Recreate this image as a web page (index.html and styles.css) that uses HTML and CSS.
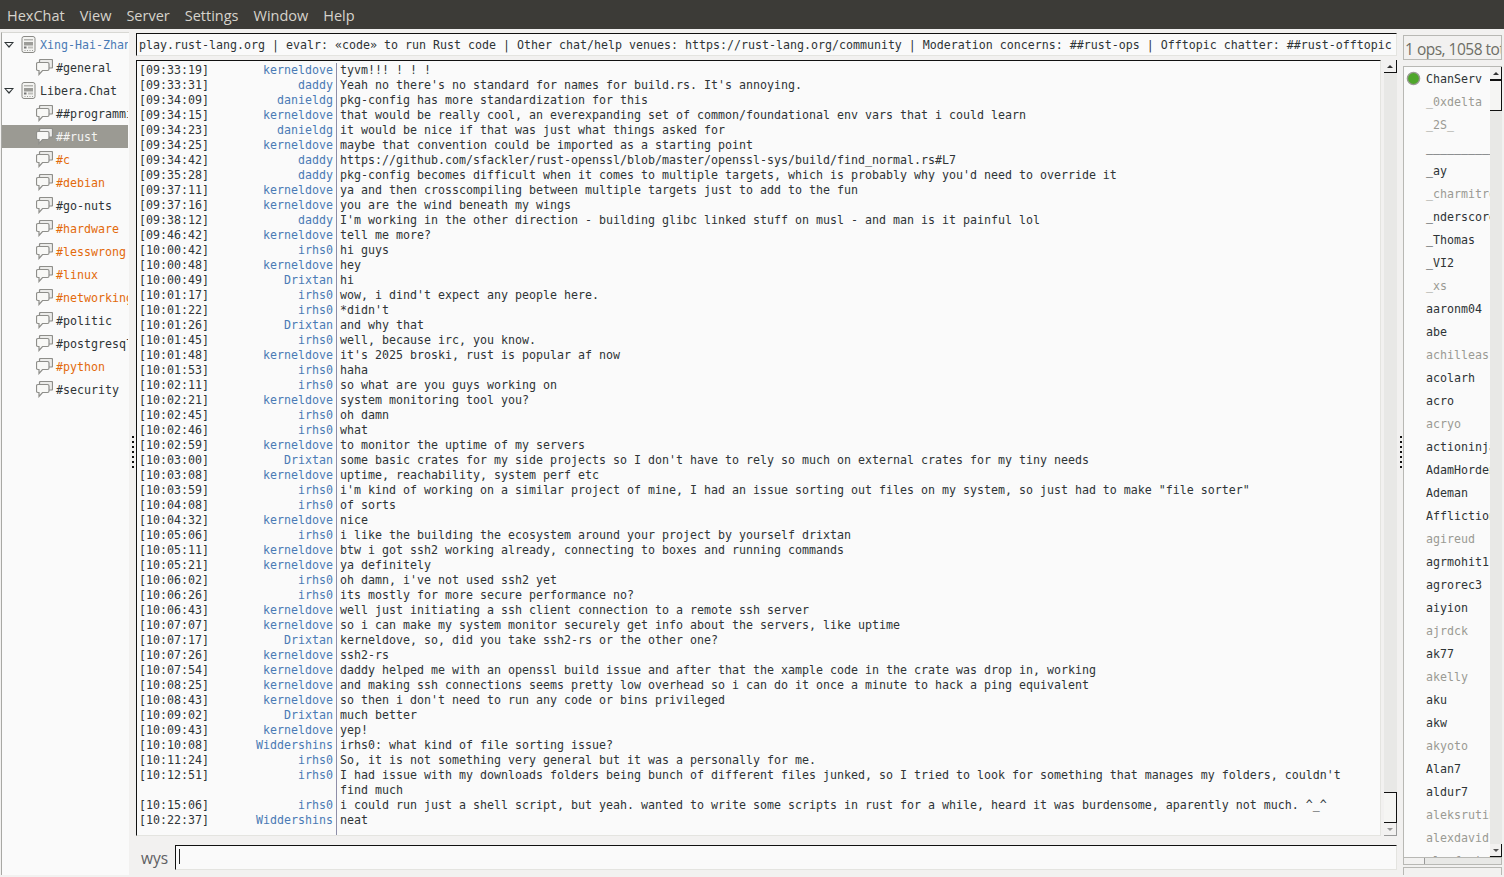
FILE: index.html
```html
<!DOCTYPE html>
<html lang="en">
<head>
<meta charset="utf-8">
<title>HexChat</title>
<link rel="stylesheet" href="styles.css">
</head>
<body>
<svg class="defs" width="0" height="0" aria-hidden="true">
  <symbol id="srv" viewBox="0 0 16 17">
    <rect x="1.5" y="0.5" width="13" height="16" rx="2" fill="#f4f4f2" stroke="#8a8a86"/>
    <rect x="3.5" y="3" width="9" height="1.5" fill="#b4b4b0"/>
    <rect x="3.5" y="6" width="9" height="3.5" fill="#9c9c98"/>
    <rect x="3.5" y="10.5" width="2.5" height="2" fill="#777"/>
    <rect x="7.5" y="10.5" width="5" height="2" fill="#c0c0bc"/>
    <path d="M4 14.5h1M6.5 14.5h1M9 14.5h1M11.5 14.5h1" stroke="#9c9c98"/>
  </symbol>
  <symbol id="chat" viewBox="0 0 17 17">
    <path d="M3.500 3.500V1.500a1 1 0 0 1 1-1H15.500a1 1 0 0 1 1 1V8a1 1 0 0 1-1 1H13" fill="#ececea" stroke="#8e8e8a" stroke-width="1.200"/>
    <path d="M2 3.500h9.500A1.500 1.500 0 0 1 13 5v5a1.500 1.500 0 0 1-1.500 1.500H6.500L3 15.500v-4H2A1.500 1.500 0 0 1 .5 10V5A1.500 1.500 0 0 1 2 3.500z" fill="#f8f8f6" stroke="#8e8e8a" stroke-width="1.200"/>
  </symbol>
</svg>
<nav class="menu">
  <span>HexChat</span><span>View</span><span>Server</span><span>Settings</span><span>Window</span><span>Help</span>
</nav>
<div class="main">
  <aside class="tree">
    <div class="row srv blue"><i class="arrow"></i><svg class="ic"><use href="#srv"/></svg><span>Xing-Hai-Zhang</span></div>
    <div class="row ch"><svg class="ic"><use href="#chat"/></svg><span>#general</span></div>
    <div class="row srv"><i class="arrow"></i><svg class="ic"><use href="#srv"/></svg><span>Libera.Chat</span></div>
    <div class="row ch"><svg class="ic"><use href="#chat"/></svg><span>##programming</span></div>
    <div class="row ch sel"><svg class="ic"><use href="#chat"/></svg><span>##rust</span></div>
    <div class="row ch or"><svg class="ic"><use href="#chat"/></svg><span>#c</span></div>
    <div class="row ch or"><svg class="ic"><use href="#chat"/></svg><span>#debian</span></div>
    <div class="row ch"><svg class="ic"><use href="#chat"/></svg><span>#go-nuts</span></div>
    <div class="row ch or"><svg class="ic"><use href="#chat"/></svg><span>#hardware</span></div>
    <div class="row ch or"><svg class="ic"><use href="#chat"/></svg><span>#lesswrong</span></div>
    <div class="row ch or"><svg class="ic"><use href="#chat"/></svg><span>#linux</span></div>
    <div class="row ch or"><svg class="ic"><use href="#chat"/></svg><span>#networking</span></div>
    <div class="row ch"><svg class="ic"><use href="#chat"/></svg><span>#politic</span></div>
    <div class="row ch"><svg class="ic"><use href="#chat"/></svg><span>#postgresql</span></div>
    <div class="row ch or"><svg class="ic"><use href="#chat"/></svg><span>#python</span></div>
    <div class="row ch"><svg class="ic"><use href="#chat"/></svg><span>#security</span></div>
  </aside>
  <div class="grip"><i></i></div>
  <section class="center">
    <div class="topic"><span>play.rust-lang.org | evalr: «code» to run Rust code | Other chat/help venues: https://rust-lang.org/community | Moderation concerns: ##rust-ops | Offtopic chatter: ##rust-offtopic</span></div>
    <div class="chatwrap">
      <div class="log">
<div class="m"><b>[09:33:19]</b><u>kerneldove</u><p>tyvm!!! ! ! !</p></div>
<div class="m"><b>[09:33:31]</b><u>daddy</u><p>Yeah no there's no standard for names for build.rs. It's annoying.</p></div>
<div class="m"><b>[09:34:09]</b><u>danieldg</u><p>pkg-config has more standardization for this</p></div>
<div class="m"><b>[09:34:15]</b><u>kerneldove</u><p>that would be really cool, an everexpanding set of common/foundational env vars that i could learn</p></div>
<div class="m"><b>[09:34:23]</b><u>danieldg</u><p>it would be nice if that was just what things asked for</p></div>
<div class="m"><b>[09:34:25]</b><u>kerneldove</u><p>maybe that convention could be imported as a starting point</p></div>
<div class="m"><b>[09:34:42]</b><u>daddy</u><p>https://github.com/sfackler/rust-openssl/blob/master/openssl-sys/build/find_normal.rs#L7</p></div>
<div class="m"><b>[09:35:28]</b><u>daddy</u><p>pkg-config becomes difficult when it comes to multiple targets, which is probably why you'd need to override it</p></div>
<div class="m"><b>[09:37:11]</b><u>kerneldove</u><p>ya and then crosscompiling between multiple targets just to add to the fun</p></div>
<div class="m"><b>[09:37:16]</b><u>kerneldove</u><p>you are the wind beneath my wings</p></div>
<div class="m"><b>[09:38:12]</b><u>daddy</u><p>I'm working in the other direction - building glibc linked stuff on musl - and man is it painful lol</p></div>
<div class="m"><b>[09:46:42]</b><u>kerneldove</u><p>tell me more?</p></div>
<div class="m"><b>[10:00:42]</b><u>irhs0</u><p>hi guys</p></div>
<div class="m"><b>[10:00:48]</b><u>kerneldove</u><p>hey</p></div>
<div class="m"><b>[10:00:49]</b><u>Drixtan</u><p>hi</p></div>
<div class="m"><b>[10:01:17]</b><u>irhs0</u><p>wow, i dind't expect any people here.</p></div>
<div class="m"><b>[10:01:22]</b><u>irhs0</u><p>*didn't</p></div>
<div class="m"><b>[10:01:26]</b><u>Drixtan</u><p>and why that</p></div>
<div class="m"><b>[10:01:45]</b><u>irhs0</u><p>well, because irc, you know.</p></div>
<div class="m"><b>[10:01:48]</b><u>kerneldove</u><p>it's 2025 broski, rust is popular af now</p></div>
<div class="m"><b>[10:01:53]</b><u>irhs0</u><p>haha</p></div>
<div class="m"><b>[10:02:11]</b><u>irhs0</u><p>so what are you guys working on</p></div>
<div class="m"><b>[10:02:21]</b><u>kerneldove</u><p>system monitoring tool you?</p></div>
<div class="m"><b>[10:02:45]</b><u>irhs0</u><p>oh damn</p></div>
<div class="m"><b>[10:02:46]</b><u>irhs0</u><p>what</p></div>
<div class="m"><b>[10:02:59]</b><u>kerneldove</u><p>to monitor the uptime of my servers</p></div>
<div class="m"><b>[10:03:00]</b><u>Drixtan</u><p>some basic crates for my side projects so I don't have to rely so much on external crates for my tiny needs</p></div>
<div class="m"><b>[10:03:08]</b><u>kerneldove</u><p>uptime, reachability, system perf etc</p></div>
<div class="m"><b>[10:03:59]</b><u>irhs0</u><p>i'm kind of working on a similar project of mine, I had an issue sorting out files on my system, so just had to make "file sorter"</p></div>
<div class="m"><b>[10:04:08]</b><u>irhs0</u><p>of sorts</p></div>
<div class="m"><b>[10:04:32]</b><u>kerneldove</u><p>nice</p></div>
<div class="m"><b>[10:05:06]</b><u>irhs0</u><p>i like the building the ecosystem around your project by yourself drixtan</p></div>
<div class="m"><b>[10:05:11]</b><u>kerneldove</u><p>btw i got ssh2 working already, connecting to boxes and running commands</p></div>
<div class="m"><b>[10:05:21]</b><u>kerneldove</u><p>ya definitely</p></div>
<div class="m"><b>[10:06:02]</b><u>irhs0</u><p>oh damn, i've not used ssh2 yet</p></div>
<div class="m"><b>[10:06:26]</b><u>irhs0</u><p>its mostly for more secure performance no?</p></div>
<div class="m"><b>[10:06:43]</b><u>kerneldove</u><p>well just initiating a ssh client connection to a remote ssh server</p></div>
<div class="m"><b>[10:07:07]</b><u>kerneldove</u><p>so i can make my system monitor securely get info about the servers, like uptime</p></div>
<div class="m"><b>[10:07:17]</b><u>Drixtan</u><p>kerneldove, so, did you take ssh2-rs or the other one?</p></div>
<div class="m"><b>[10:07:26]</b><u>kerneldove</u><p>ssh2-rs</p></div>
<div class="m"><b>[10:07:54]</b><u>kerneldove</u><p>daddy helped me with an openssl build issue and after that the xample code in the crate was drop in, working</p></div>
<div class="m"><b>[10:08:25]</b><u>kerneldove</u><p>and making ssh connections seems pretty low overhead so i can do it once a minute to hack a ping equivalent</p></div>
<div class="m"><b>[10:08:43]</b><u>kerneldove</u><p>so then i don't need to run any code or bins privileged</p></div>
<div class="m"><b>[10:09:02]</b><u>Drixtan</u><p>much better</p></div>
<div class="m"><b>[10:09:43]</b><u>kerneldove</u><p>yep!</p></div>
<div class="m"><b>[10:10:08]</b><u>Widdershins</u><p>irhs0: what kind of file sorting issue?</p></div>
<div class="m"><b>[10:11:24]</b><u>irhs0</u><p>So, it is not something very general but it was a personally for me.</p></div>
<div class="m"><b>[10:12:51]</b><u>irhs0</u><p>I had issue with my downloads folders being bunch of different files junked, so I tried to look for something that manages my folders, couldn't<br>find much</p></div>
<div class="m"><b>[10:15:06]</b><u>irhs0</u><p>i could run just a shell script, but yeah. wanted to write some scripts in rust for a while, heard it was burdensome, aparently not much. ^_^</p></div>
<div class="m last"><b>[10:22:37]</b><u>Widdershins</u><p>neat</p></div>
      </div>
      <div class="vbar wide">
        <div class="btn up"></div>
        <div class="track end"><div class="thumb tall"></div></div>
        <div class="btn down"></div>
      </div>
    </div>
    <div class="inputrow">
      <span class="me">wys</span>
      <div class="entry"><i class="caret"></i></div>
    </div>
  </section>
  <div class="grip gr"><i></i></div>
  <aside class="side">
    <div class="count"><span>1 ops, 1058 total</span></div>
    <div class="userbox">
      <div class="users">
        <div class="n first"><svg class="dot" viewBox="0 0 16 16"><circle cx="8" cy="8" r="6.500" fill="#4ea62a" stroke="#9a9a94" stroke-width="1.500"/></svg><span>ChanServ</span></div>
        <div class="n g"><span>_0xdelta</span></div>
        <div class="n g"><span>_2S_</span></div>
        <div class="n"><span>____________</span></div>
        <div class="n"><span>_ay</span></div>
        <div class="n g"><span>_charmitro</span></div>
        <div class="n"><span>_nderscore</span></div>
        <div class="n"><span>_Thomas</span></div>
        <div class="n"><span>_VI2</span></div>
        <div class="n g"><span>_xs</span></div>
        <div class="n"><span>aaronm04</span></div>
        <div class="n"><span>abe</span></div>
        <div class="n g"><span>achilleas</span></div>
        <div class="n"><span>acolarh</span></div>
        <div class="n"><span>acro</span></div>
        <div class="n g"><span>acryo</span></div>
        <div class="n"><span>actioninja</span></div>
        <div class="n"><span>AdamHorden</span></div>
        <div class="n"><span>Ademan</span></div>
        <div class="n"><span>Afflictions</span></div>
        <div class="n g"><span>agireud</span></div>
        <div class="n"><span>agrmohit1</span></div>
        <div class="n"><span>agrorec3</span></div>
        <div class="n"><span>aiyion</span></div>
        <div class="n g"><span>ajrdck</span></div>
        <div class="n"><span>ak77</span></div>
        <div class="n g"><span>akelly</span></div>
        <div class="n"><span>aku</span></div>
        <div class="n"><span>akw</span></div>
        <div class="n g"><span>akyoto</span></div>
        <div class="n"><span>Alan7</span></div>
        <div class="n"><span>aldur7</span></div>
        <div class="n g"><span>aleksrutins</span></div>
        <div class="n g"><span>alexdavid</span></div>
        <div class="n g"><span>alexfertel</span></div>
      </div>
      <div class="vbar narrow">
        <div class="btn up"></div>
        <div class="track"><div class="thumb"></div></div>
        <div class="btn down"></div>
      </div>
    </div>
    <div class="hbar"><div class="hthumb"></div></div>
    <div class="foot"></div>
  </aside>
</div>
</body>
</html>
```

FILE: styles.css
```css
* { box-sizing: border-box; }
html, body { margin: 0; height: 100%; overflow: hidden; }
body {
  background: #f2f1f0;
  font-family: "DejaVu Sans Mono", monospace;
  font-size: 11.635px;
  color: #2e3436;
  display: flex;
  flex-direction: column;
  width: 1504px;
  height: 877px;
}
.defs { position: absolute; }

.menu {
  height: 29px;
  flex: none;
  background: #3c3b37;
  color: #d6d3cc;
  font-family: "Open Sans", "Noto Sans", sans-serif;
  font-size: 14.5px;
  display: flex;
  align-items: center;
  gap: 15px;
  padding: 1px 0 0 7px;
}

.main { flex: 1; display: flex; min-height: 0; }

.tree {
  width: 128px;
  margin: 3px 0 2px 1px;
  flex: none;
  background: #fafafa;
  border-left: 1px solid #a8a8a4;
  border-top: 1px solid #d8d8d4;
  padding-right: 1px;
  overflow: hidden;
}
.row {
  height: 23px;
  display: flex;
  align-items: center;
  white-space: nowrap;
  overflow: hidden;
}
.row.srv { padding-left: 2px; }
.row.ch { padding-left: 34px; }
.arrow {
  width: 0; height: 0; flex: none;
  border-left: 5px solid transparent;
  border-right: 5px solid transparent;
  border-top: 6px solid #2e3436;
  margin-right: 6px;
  position: relative;
}
.arrow::after {
  content: "";
  position: absolute;
  left: -3px; top: -5px;
  border-left: 3px solid transparent;
  border-right: 3px solid transparent;
  border-top: 3.500px solid #fafafa;
}
.ic { width: 17px; height: 17px; flex: none; margin-right: 3px; }
.blue { color: #4a7ab5; }
.or { color: #e36a0c; }
.sel { background: #9b9a93; color: #f4f4f2; }

.grip { width: 7px; flex: none; display: flex; align-items: center; justify-content: center; padding-bottom: 2px; }
.grip i {
  width: 2px; height: 32px; margin-left: 1px;
  background: repeating-linear-gradient(#111 0 2px, transparent 2px 5px);
}
.grip.gr { width: 6px; }

.center { width: 1261px; flex: none; display: flex; flex-direction: column; padding-top: 4px; }
.topic {
  height: 23px;
  flex: none;
  background: #fafafa;
  border-top: 1px solid #111;
  border-left: 1px solid #111;
  border-right: 1px solid #e4e4e0;
  border-bottom: 1px solid #e4e4e0;
  padding-left: 2px;
  line-height: 22px;
  white-space: nowrap;
  overflow: hidden;
}
.chatwrap {
  height: 776px;
  flex: none;
  margin-top: 4px;
  display: flex;
}
.log {
  flex: 1;
  padding-top: 2px;
  min-width: 0;
  overflow: hidden;
  background: #fafafa;
  border-top: 1px solid #111;
  border-left: 1px solid #111;
  border-right: 1px solid #e4e4e0;
  border-bottom: 1px solid #e4e4e0;
  display: flex;
  flex-direction: column;
}
.m { display: grid; grid-template-columns: 97px 102px 1fr; line-height: 15px; }
.m b { font-weight: normal; padding-left: 2px; }
.m u { text-decoration: none; text-align: right; color: #4a7ab5; padding-right: 3px; }
.m p { margin: 0; padding-left: 3px; border-left: 1px solid #8e8ea8; white-space: nowrap; }
.m.last { flex: 1; }

.vbar { width: 12px; flex: none; display: flex; flex-direction: column; background: #e8e8e6; }
.vbar.wide { width: 13px; margin-left: 3px; }
.btn { height: 13px; flex: none; background: #f2f1f0; border-right: 1px solid #111; border-bottom: 1px solid #111; position: relative; }
.btn::after {
  content: "";
  position: absolute; left: 3px; top: 5px;
  border-left: 3px solid transparent;
  border-right: 3px solid transparent;
}
.up::after { border-bottom: 3px solid #333; }
.down::after { border-top: 3px solid #555; }
.wide .down { border-right-color: #999; border-bottom-color: #999; }
.wide .down::after { border-top-color: #999; }
.track { flex: 1; display: flex; flex-direction: column; }
.track.end { justify-content: flex-end; }
.thumb { height: 31px; background: #f5f5f3; border-right: 1px solid #111; border-bottom: 1px solid #111; border-top: 1px solid #111; }

.inputrow { height: 34px; flex: none; display: flex; align-items: flex-end; }
.me { width: 39px; flex: none; padding: 0 0 1px 5px; font-family: "Open Sans", "Noto Sans", sans-serif; font-size: 15.500px; color: #5e5e62; }
.entry { flex: 1; height: 25px; background: #fafafa; border-top: 1px solid #111; border-left: 1px solid #111; border-right: 1px solid #e4e4e0; border-bottom: 1px solid #e4e4e0; padding: 3px 0 0 3px; }
.caret { display: block; width: 1px; height: 15px; background: #222; }

.side { width: 101px; flex: none; display: flex; flex-direction: column; padding: 6px 2px 0 0; }
.count {
  height: 25px; flex: none;
  border: 1px solid #b8b8b4;
  background: #f2f1f0;
  font-family: "Open Sans", "Noto Sans", sans-serif;
  font-size: 15.500px;
  letter-spacing: -.5px;
  color: #6e6e66;
  padding-left: 1px;
  line-height: 26px;
  white-space: nowrap;
  overflow: hidden;
}
.userbox { height: 791px; margin-top: 6px; flex: none; display: flex; background: #fafafa; border-left: 1px solid #b8b8b4; border-top: 1px solid #b8b8b4; }
.users { flex: 1; min-width: 0; overflow: hidden; padding-top: 1px; }
.n { height: 23px; padding-left: 22px; line-height: 23px; white-space: nowrap; overflow: hidden; position: relative; }
.n.g { color: #9a9a94; }
.dot { position: absolute; left: 2px; top: 3px; width: 15px; height: 15px; }
.hbar { height: 8px; flex: none; border: 1px solid #b8b8b4; background: #e8e8e6; }
.hthumb { width: 21px; height: 6px; background: #f2f1f0; border-right: 1px solid #999; }
.foot { height: 8px; margin-top: 2px; flex: none; border-top: 1px solid #b8b8b4; border-left: 1px solid #b8b8b4; border-right: 1px solid #b8b8b4; }
```
